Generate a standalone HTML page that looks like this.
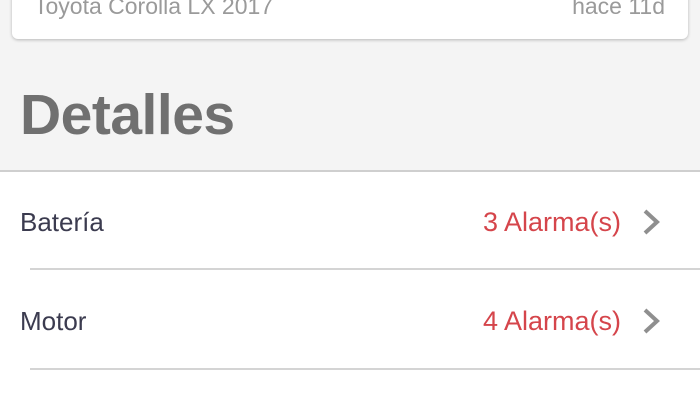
<!DOCTYPE html>
<html><head><meta charset="utf-8"><style>
body{margin:0;width:700px;height:400px;overflow:hidden;background:#fff;font-family:"Liberation Sans",sans-serif;position:relative}
.top{position:absolute;left:0;top:0;width:700px;height:170px;background:#f4f4f4}
.card{position:absolute;left:12px;top:-20px;width:676px;height:59px;background:#fff;border-radius:6px;box-shadow:0 1px 3px rgba(0,0,0,.25)}
.t1{position:absolute;left:34px;top:-8px;font-size:23px;color:#9a9a9a;line-height:28px}
.t2{position:absolute;right:35px;top:-8px;font-size:23px;color:#9a9a9a;line-height:28px}
h1{position:absolute;left:20px;top:80px;margin:0;font-size:57px;font-weight:bold;color:#707070;line-height:70px;letter-spacing:-0.5px}
.hl{position:absolute;left:0;top:170px;width:700px;height:2px;background:#cfcfcf}
.row{position:absolute;left:0;width:700px;height:98px}
.lab{position:absolute;left:20px;top:0;line-height:100px;font-size:26px;color:#3b3b4f}
.al{position:absolute;right:79px;top:0;line-height:100px;font-size:27px;color:#d5454b}
.ch{position:absolute;left:641px;top:36px}
.div{position:absolute;left:30px;width:670px;height:2px;background:#d4d4d4}
</style></head><body>
<div class="top"></div>
<div class="card"></div>
<div class="t1">Toyota Corolla LX 2017</div>
<div class="t2">hace 11d</div>
<h1>Detalles</h1>
<div class="hl"></div>
<div class="row" style="top:172px"><span class="lab">Batería</span><span class="al">3 Alarma(s)</span>
<svg class="ch" width="22" height="28" viewBox="0 0 22 28"><path d="M4 3 L16 14 L4 25" fill="none" stroke="#8f8f8f" stroke-width="4"/></svg></div>
<div class="div" style="top:268px"></div>
<div class="row" style="top:271px"><span class="lab">Motor</span><span class="al">4 Alarma(s)</span>
<svg class="ch" width="22" height="28" viewBox="0 0 22 28"><path d="M4 3 L16 14 L4 25" fill="none" stroke="#8f8f8f" stroke-width="4"/></svg></div>
<div class="div" style="top:368px"></div>
</body></html>
